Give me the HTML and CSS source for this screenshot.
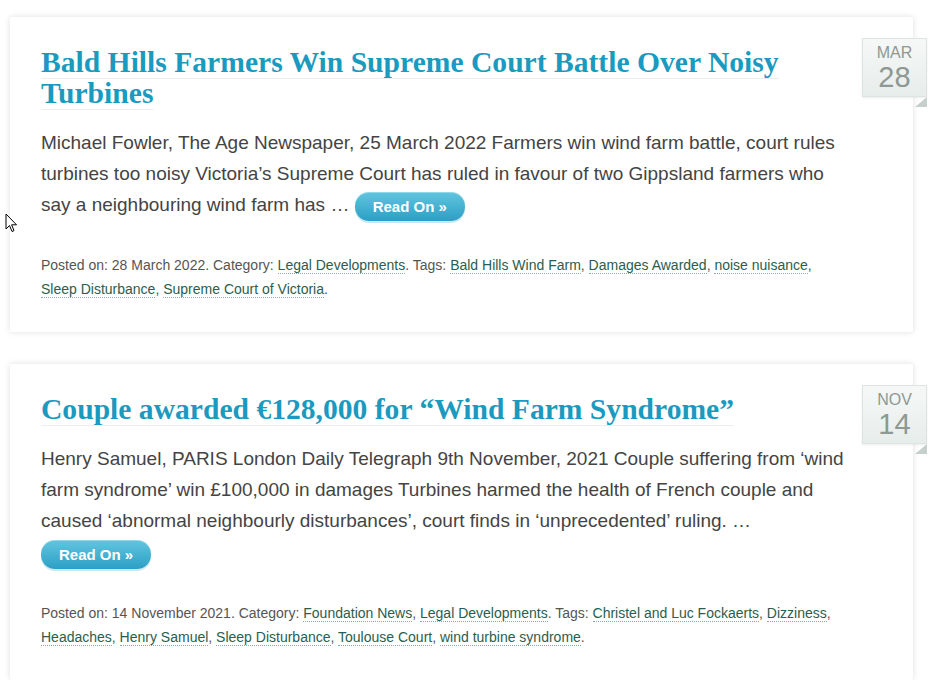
FILE: index.html
```html
<!DOCTYPE html>
<html lang="en">
<head>
<meta charset="utf-8">
<title>Posts</title>
<link rel="stylesheet" href="styles.css">
</head>
<body>
<div class="posts">
  <article class="post">
    <h2 class="post-title"><a href="#">Bald Hills Farmers Win Supreme Court Battle Over Noisy Turbines</a></h2>
    <div class="date-badge"><span class="month">MAR</span><span class="day">28</span></div>
    <p class="excerpt">Michael Fowler, The Age Newspaper, 25 March 2022 Farmers win wind farm battle, court rules turbines too noisy Victoria’s Supreme Court has ruled in favour of two Gippsland farmers who say a neighbouring wind farm has … <a class="read-on" href="#">Read On »</a></p>
    <p class="meta">Posted on: 28 March 2022. Category: <a href="#">Legal Developments</a>. Tags: <a href="#">Bald Hills Wind Farm</a>, <a href="#">Damages Awarded</a>, <a href="#">noise nuisance</a>, <a href="#">Sleep Disturbance</a>, <a href="#">Supreme Court of Victoria</a>.</p>
  </article>
  <article class="post">
    <h2 class="post-title"><a href="#">Couple awarded €128,000 for “Wind Farm Syndrome”</a></h2>
    <div class="date-badge"><span class="month">NOV</span><span class="day">14</span></div>
    <p class="excerpt">Henry Samuel, PARIS London Daily Telegraph 9th November, 2021 Couple suffering from ‘wind farm syndrome’ win £100,000 in damages Turbines harmed the health of French couple and caused ‘abnormal neighbourly disturbances’, court finds in ‘unprecedented’ ruling. … <a class="read-on" href="#">Read On »</a></p>
    <p class="meta">Posted on: 14 November 2021. Category: <a href="#">Foundation News</a>, <a href="#">Legal Developments</a>. Tags: <a href="#">Christel and Luc Fockaerts</a>, <a href="#">Dizziness</a>, <a href="#">Headaches</a>, <a href="#">Henry Samuel</a>, <a href="#">Sleep Disturbance</a>, <a href="#">Toulouse Court</a>, <a href="#">wind turbine syndrome</a>.</p>
  </article>
</div>
<svg class="cursor" width="14" height="20" viewBox="0 0 14 20"><path d="M1 1 L1 16 L4.5 12.5 L7 18.5 L9 17.6 L6.6 11.8 L11.5 11.8 Z" fill="#fff" stroke="#000" stroke-width="1"/></svg>
</body>
</html>
```
FILE: styles.css
```css
html, body {
  margin: 0;
  padding: 0;
  background: #ffffff;
}
body {
  font-family: "Liberation Sans", Arial, sans-serif;
  color: #444;
  position: relative;
}
.posts {
  width: 903px;
  margin-left: 10px;
  padding-top: 17px;
  display: flex;
  flex-direction: column;
  gap: 32px;
}
.post {
  position: relative;
  background: #fff;
  box-shadow: 0 0 6px rgba(0, 0, 0, 0.13);
  border-radius: 2px;
  padding: 30px 62px 31px 31px;
}
.post-title {
  margin: 0;
  font-family: "Liberation Serif", "Times New Roman", serif;
  font-weight: bold;
  font-size: 29.6px;
  line-height: 31px;
}
.post-title a {
  color: #1b9ac0;
  text-decoration: none;
  border-bottom: 1px solid #eaeeee;
}
.excerpt {
  margin: 18px 0 0;
  font-size: 19px;
  line-height: 31px;
  color: #444;
}
.read-on {
  display: inline-block;
  vertical-align: middle;
  height: 29px;
  line-height: 29px;
  padding: 0 18px;
  margin-top: 2px;
  border-radius: 14px;
  background: linear-gradient(#62c5df, #2c9fc5);
  color: #fff;
  font-size: 15px;
  font-weight: bold;
  text-decoration: none;
  box-shadow: 0 2px 0 #cde8f0, inset 0 1px 0 rgba(255, 255, 255, 0.3);
}
.meta {
  margin: 32px 0 0;
  font-size: 14px;
  line-height: 24px;
  color: #555;
}
.meta a {
  color: #2a5e4e;
  text-decoration: none;
  border-bottom: 1px dotted #8aa;
}
.date-badge {
  position: absolute;
  top: 21px;
  right: -14px;
  width: 63px;
  height: 53px;
  border: 1px solid #dde4e2;
  background: linear-gradient(#f5f8f7, #e7edeb);
  box-shadow: 0 1px 2px rgba(0, 0, 0, 0.08);
  display: flex;
  flex-direction: column;
  align-items: center;
  padding-top: 4px;
  box-sizing: content-box;
}
.date-badge::after {
  content: "";
  position: absolute;
  right: -1px;
  bottom: -11px;
  border-style: solid;
  border-width: 10px 12px 0 0;
  border-color: transparent #c5cfcb transparent transparent;
}
.month {
  font-size: 16px;
  line-height: 20px;
  color: #8e9894;
}
.day {
  font-size: 29px;
  line-height: 28px;
  color: #8e9894;
}
.cursor {
  position: absolute;
  left: 5px;
  top: 213px;
}
```
